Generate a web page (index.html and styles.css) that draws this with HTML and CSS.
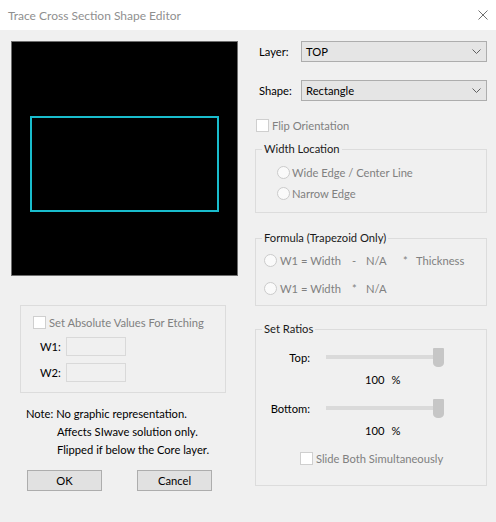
FILE: index.html
```html
<!DOCTYPE html>
<html>
<head>
<meta charset="utf-8">
<title>Trace Cross Section Shape Editor</title>
<link rel="stylesheet" href="styles.css">
</head>
<body>
<div class="window">
  <div class="titlebar">
    <span class="title">Trace Cross Section Shape Editor</span>
    <svg class="close" width="10" height="10" viewBox="0 0 10 10"><path d="M0.5 0.5L9.5 9.5M9.5 0.5L0.5 9.5" stroke="#707070" stroke-width="1" fill="none"/></svg>
  </div>
  <div class="content">
    <div class="left">
      <div class="canvas">
        <svg width="225" height="233" viewBox="0 0 225 233"><rect x="19" y="75" width="187" height="94" fill="none" stroke="#19bccd" stroke-width="2"/></svg>
      </div>
      <div class="abs-group">
        <div class="check disabled"><span class="box"></span><span>Set Absolute Values For Etching</span></div>
        <div class="field"><span class="flabel">W1:</span><span class="edit"></span></div>
        <div class="field"><span class="flabel">W2:</span><span class="edit"></span></div>
      </div>
      <div class="note">
        <div>Note: No graphic representation.</div>
        <div class="indent">Affects SIwave solution only.</div>
        <div class="indent">Flipped if below the Core layer.</div>
      </div>
      <div class="buttons">
        <button class="btn">OK</button>
        <button class="btn">Cancel</button>
      </div>
    </div>
    <div class="right">
      <div class="row">
        <span class="rlabel">Layer:</span>
        <div class="select"><span>TOP</span><svg width="9" height="5" viewBox="0 0 9 5"><path d="M0.5 0.5L4.5 4.5L8.5 0.5" stroke="#606060" fill="none"/></svg></div>
      </div>
      <div class="row row-shape">
        <span class="rlabel">Shape:</span>
        <div class="select"><span>Rectangle</span><svg width="9" height="5" viewBox="0 0 9 5"><path d="M0.5 0.5L4.5 4.5L8.5 0.5" stroke="#606060" fill="none"/></svg></div>
      </div>
      <div class="check disabled flip"><span class="box"></span><span>Flip Orientation</span></div>

      <fieldset class="group wl">
        <legend>Width Location</legend>
        <div class="radio-row disabled"><span class="radio"></span><span>Wide Edge / Center Line</span></div>
        <div class="radio-row disabled"><span class="radio"></span><span>Narrow Edge</span></div>
      </fieldset>

      <fieldset class="group formula">
        <legend>Formula (Trapezoid Only)</legend>
        <div class="frow disabled">
          <span class="radio"></span><span>W1 = Width</span><span>-</span><span>N/A</span><span>*</span><span>Thickness</span>
        </div>
        <div class="frow disabled">
          <span class="radio"></span><span>W1 = Width</span><span>*</span><span>N/A</span><span></span><span></span>
        </div>
      </fieldset>

      <fieldset class="group ratios">
        <legend>Set Ratios</legend>
        <div class="srow">
          <span class="slabel">Top:</span>
          <div class="slider"><div class="track"></div><div class="thumb"></div></div>
        </div>
        <div class="value">100<span class="pct">%</span></div>
        <div class="srow srow2">
          <span class="slabel">Bottom:</span>
          <div class="slider"><div class="track"></div><div class="thumb"></div></div>
        </div>
        <div class="value">100<span class="pct">%</span></div>
        <div class="check disabled both"><span class="box"></span><span>Slide Both Simultaneously</span></div>
      </fieldset>
    </div>
  </div>
</div>
</body>
</html>
```
FILE: styles.css
```css
* { box-sizing: border-box; }
html, body { margin: 0; padding: 0; }
body {
  width: 496px;
  height: 522px;
  font-family: "Lato", "Liberation Sans", sans-serif;
  font-size: 11.2px;
  color: #000;
  background: #f0f0f0;
}
.window {
  width: 496px;
  height: 522px;
  background: #f0f0f0;
  overflow: hidden;
}
.titlebar {
  height: 30px;
  background: #fff;
  display: flex;
  align-items: center;
  justify-content: space-between;
  padding: 0 8px;
}
.title {
  font-size: 12px;
  color: #8f8f8f;
}
.close { margin-bottom: 1px; }

.content {
  display: flex;
  padding-top: 11px;
}
.left {
  margin-left: 11px;
  width: 227px;
}
.canvas {
  width: 227px;
  height: 235px;
  background: #000;
  border: 1px solid #6e6e6e;
}
.canvas svg { display: block; }

.abs-group {
  margin: 29px 0 0 9px;
  width: 206px;
  height: 88px;
  border: 1px solid #dcdcdc;
  padding: 10px 0 0 12px;
}
.check {
  display: flex;
  align-items: center;
  height: 13px;
  gap: 3px;
}
.box {
  width: 13px;
  height: 13px;
  border: 1px solid #cfcfcf;
  background: #fff;
  flex: none;
}
.disabled { color: #808080; }
.field {
  display: flex;
  align-items: center;
  height: 19px;
  margin-top: 8px;
  padding-left: 7px;
}
.field + .field { margin-top: 7px; }
.flabel { width: 26px; color: #000; }
.edit {
  width: 60px;
  height: 19px;
  border: 1px solid #d9d9d9;
  background: #f0f0f0;
}
.note {
  margin: 12px 0 0 15px;
  line-height: 18px;
  white-space: nowrap;
}
.indent { padding-left: 31px; }
.buttons {
  display: flex;
  gap: 35px;
  margin: 11px 0 0 16px;
}
.btn {
  width: 75px;
  height: 21px;
  border: 1px solid #adadad;
  background: #e1e1e1;
  font-family: inherit;
  font-size: 11.2px;
  color: #000;
  padding: 0;
}

.right {
  margin-left: 17px;
  width: 232px;
}
.row {
  display: flex;
  align-items: center;
  height: 21px;
}
.row-shape { margin-top: 18px; }
.rlabel {
  width: 46px;
  padding-left: 4px;
}
.select {
  width: 186px;
  height: 21px;
  border: 1px solid #adadad;
  background: #e5e5e5;
  display: flex;
  align-items: center;
  justify-content: space-between;
  padding: 0 5px 0 4px;
}
.flip {
  margin-top: 18px;
  padding-left: 1px;
}

.group {
  margin: 0;
  padding: 0;
  border: 1px solid #dcdcdc;
  min-width: 0;
  width: 232px;
}
.group legend {
  margin-left: 6px;
  padding: 0 2px;
  line-height: 14px;
  color: #1a1a1a;
}
.wl {
  margin-top: 10px;
  padding: 7px 0 10px 0;
}
.radio-row {
  display: flex;
  align-items: center;
  gap: 2px;
  height: 18px;
  padding-left: 21px;
}
.radio-row + .radio-row { margin-top: 3px; }
.radio {
  width: 13px;
  height: 13px;
  border-radius: 50%;
  border: 1px solid #cbcbcb;
  background: #fafafa;
  flex: none;
}
.formula {
  margin-top: 18px;
  padding: 6px 0 8px 0;
}
.frow {
  display: grid;
  grid-template-columns: 16px 72px 14px 37px 13px auto;
  align-items: center;
  height: 18px;
  padding-left: 8px;
}
.frow + .frow { margin-top: 10px; }

.ratios {
  margin-top: 16px;
  padding: 11px 0 20px 0;
}
.srow {
  display: grid;
  grid-template-columns: 54px 118px;
  column-gap: 16px;
  align-items: center;
  height: 20px;
}
.srow2 { margin-top: 10px; }
.slabel { text-align: right; }
.slider {
  position: relative;
  height: 20px;
}
.track {
  margin-top: 8px;
  height: 4px;
  background: #dadada;
}
.thumb {
  position: absolute;
  right: 0;
  top: 1px;
  width: 11px;
  height: 19px;
  background: #c6c6c6;
  border-radius: 1px 1px 5px 5px / 1px 1px 4px 4px;
}
.value {
  margin-top: 5px;
  height: 16px;
  line-height: 16px;
  padding-left: 109px;
}
.pct { margin-left: 7px; }
.both {
  margin-top: 13px;
  padding-left: 44px;
}
```
